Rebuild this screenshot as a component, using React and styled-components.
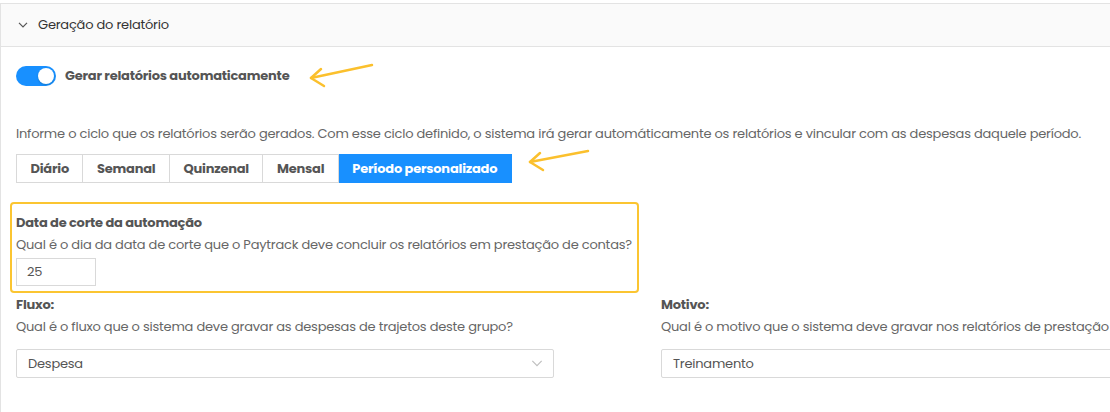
import React from "react";
import styled, { createGlobalStyle } from "styled-components";

const GlobalStyle = createGlobalStyle`
  html, body {
    margin: 0;
    padding: 0;
    background: #ffffff;
    overflow: hidden;
  }
  body {
    font-family: "Poppins", "Open Sans", "Liberation Sans", sans-serif;
    font-size: 13px;
    letter-spacing: -0.22px;
    color: #555;
  }
`;

const Panel = styled.section`
  margin-top: 3px;
  width: 1300px;
  height: 409px;
  border-top: 1px solid #e3e3e3;
  border-left: 1px solid #e3e3e3;
  box-sizing: border-box;
`;

const Header = styled.div`
  height: 42px;
  display: flex;
  align-items: center;
  gap: 10px;
  padding-left: 17px;
  background: #fafafa;
  border-bottom: 1px solid #e3e3e3;
  color: #333;
  font-size: 13px;
`;

const Body = styled.div`
  padding: 19px 0 0 15px;
`;

const ToggleRow = styled.div`
  position: relative;
  display: flex;
  align-items: center;
  gap: 9px;
  height: 20px;
`;

const Switch = styled.span`
  width: 40px;
  height: 20px;
  border-radius: 10px;
  background: #1890ff;
  position: relative;
  flex: none;
  &::after {
    content: "";
    position: absolute;
    top: 2px;
    right: 2px;
    width: 16px;
    height: 16px;
    border-radius: 50%;
    background: #fff;
    box-shadow: 0 1px 2px rgba(0, 35, 11, 0.2);
  }
`;

const Strong = styled.span`
  font-weight: 700;
  color: #555;
  font-size: 13px;
`;

const Arrow = styled.svg`
  position: absolute;
  left: ${(p) => p.$left}px;
  top: ${(p) => p.$top}px;
  overflow: visible;
`;

const Description = styled.p`
  margin: 38px 0 0;
  line-height: 20px;
  color: #666;
  white-space: nowrap;
`;

const Segments = styled.div`
  position: relative;
  display: flex;
  margin-top: 10px;
  height: 29px;
`;

const Segment = styled.span`
  display: flex;
  align-items: center;
  padding: 0 13.5px;
  border: 1px solid ${(p) => (p.$active ? "#1890ff" : "#d9d9d9")};
  border-left-width: ${(p) => (p.$first ? 1 : 0)}px;
  background: ${(p) => (p.$active ? "#1890ff" : "#fff")};
  color: ${(p) => (p.$active ? "#fff" : "#555")};
  font-weight: 700;
  box-sizing: border-box;
`;

const Highlight = styled.div`
  margin: 19px 0 0 -6px;
  width: 629px;
  box-sizing: border-box;
  border: 2px solid #fbc531;
  border-radius: 4px;
  padding: 9px 4px 5px;
`;

const Label = styled.div`
  font-weight: 700;
  color: #555;
  line-height: 20px;
`;

const Hint = styled.div`
  color: #666;
  line-height: 20px;
  margin-top: 2px;
  white-space: nowrap;
`;

const NumberInput = styled.div`
  margin-top: 3px;
  width: 80px;
  height: 28px;
  box-sizing: border-box;
  border: 1px solid #d9d9d9;
  display: flex;
  align-items: center;
  padding-left: 10px;
  color: #555;
`;

const Columns = styled.div`
  display: grid;
  grid-template-columns: 538px 538px;
  column-gap: 107px;
  margin-top: 2px;
`;

const Select = styled.div`
  margin-top: 12px;
  height: 29px;
  box-sizing: border-box;
  border: 1px solid #d9d9d9;
  border-radius: 2px;
  display: flex;
  align-items: center;
  justify-content: space-between;
  padding: 0 10px 0 11px;
  color: #555;
`;

const YellowArrow = ({ left, top, w, h }) => (
  <Arrow $left={left} $top={top} width={w} height={h} viewBox={`0 0 ${w} ${h}`}>
    <g fill="none" stroke="#fbc02d" strokeWidth="2.5" strokeLinecap="round" strokeLinejoin="round">
      <line x1={w - 2} y1="3" x2="3" y2={h - 10} />
      <polyline points={`13,${h - 19} 3,${h - 10} 16,${h - 2}`} />
    </g>
  </Arrow>
);

const Chevron = ({ size = 10, color = "#555", width = 1.2 }) => (
  <svg width={size} height={size / 2 + 1} viewBox="0 0 10 6">
    <polyline points="1,0.8 5,4.8 9,0.8" fill="none" stroke={color} strokeWidth={width} />
  </svg>
);

export default function App() {
  const cycles = ["Diário", "Semanal", "Quinzenal", "Mensal"];
  return (
    <>
      <GlobalStyle />
      <Panel>
        <Header>
          <Chevron />
          Geração do relatório
        </Header>
        <Body>
          <ToggleRow>
            <Switch />
            <Strong>Gerar relatórios automaticamente</Strong>
            <YellowArrow left={292} top={-4} w={66} h={26} />
          </ToggleRow>

          <Description>
            Informe o ciclo que os relatórios serão gerados. Com esse ciclo definido, o sistema irá gerar
            automáticamente os relatórios e vincular com as despesas daquele período.
          </Description>

          <Segments>
            {cycles.map((c, i) => (
              <Segment key={c} $first={i === 0}>
                {c}
              </Segment>
            ))}
            <Segment $active>Período personalizado</Segment>
            <YellowArrow left={511} top={-6} w={63} h={24} />
          </Segments>

          <Highlight>
            <Label>Data de corte da automação</Label>
            <Hint>
              Qual é o dia da data de corte que o Paytrack deve concluir os relatórios em prestação de contas?
            </Hint>
            <NumberInput>25</NumberInput>
          </Highlight>

          <Columns>
            <div>
              <Label>Fluxo:</Label>
              <Hint>Qual é o fluxo que o sistema deve gravar as despesas de trajetos deste grupo?</Hint>
              <Select>
                Despesa
                <Chevron size={12} color="#bfbfbf" width={1} />
              </Select>
            </div>
            <div>
              <Label>Motivo:</Label>
              <Hint>Qual é o motivo que o sistema deve gravar nos relatórios de prestação de contas deste grupo?</Hint>
              <Select>Treinamento</Select>
            </div>
          </Columns>
        </Body>
      </Panel>
    </>
  );
}
